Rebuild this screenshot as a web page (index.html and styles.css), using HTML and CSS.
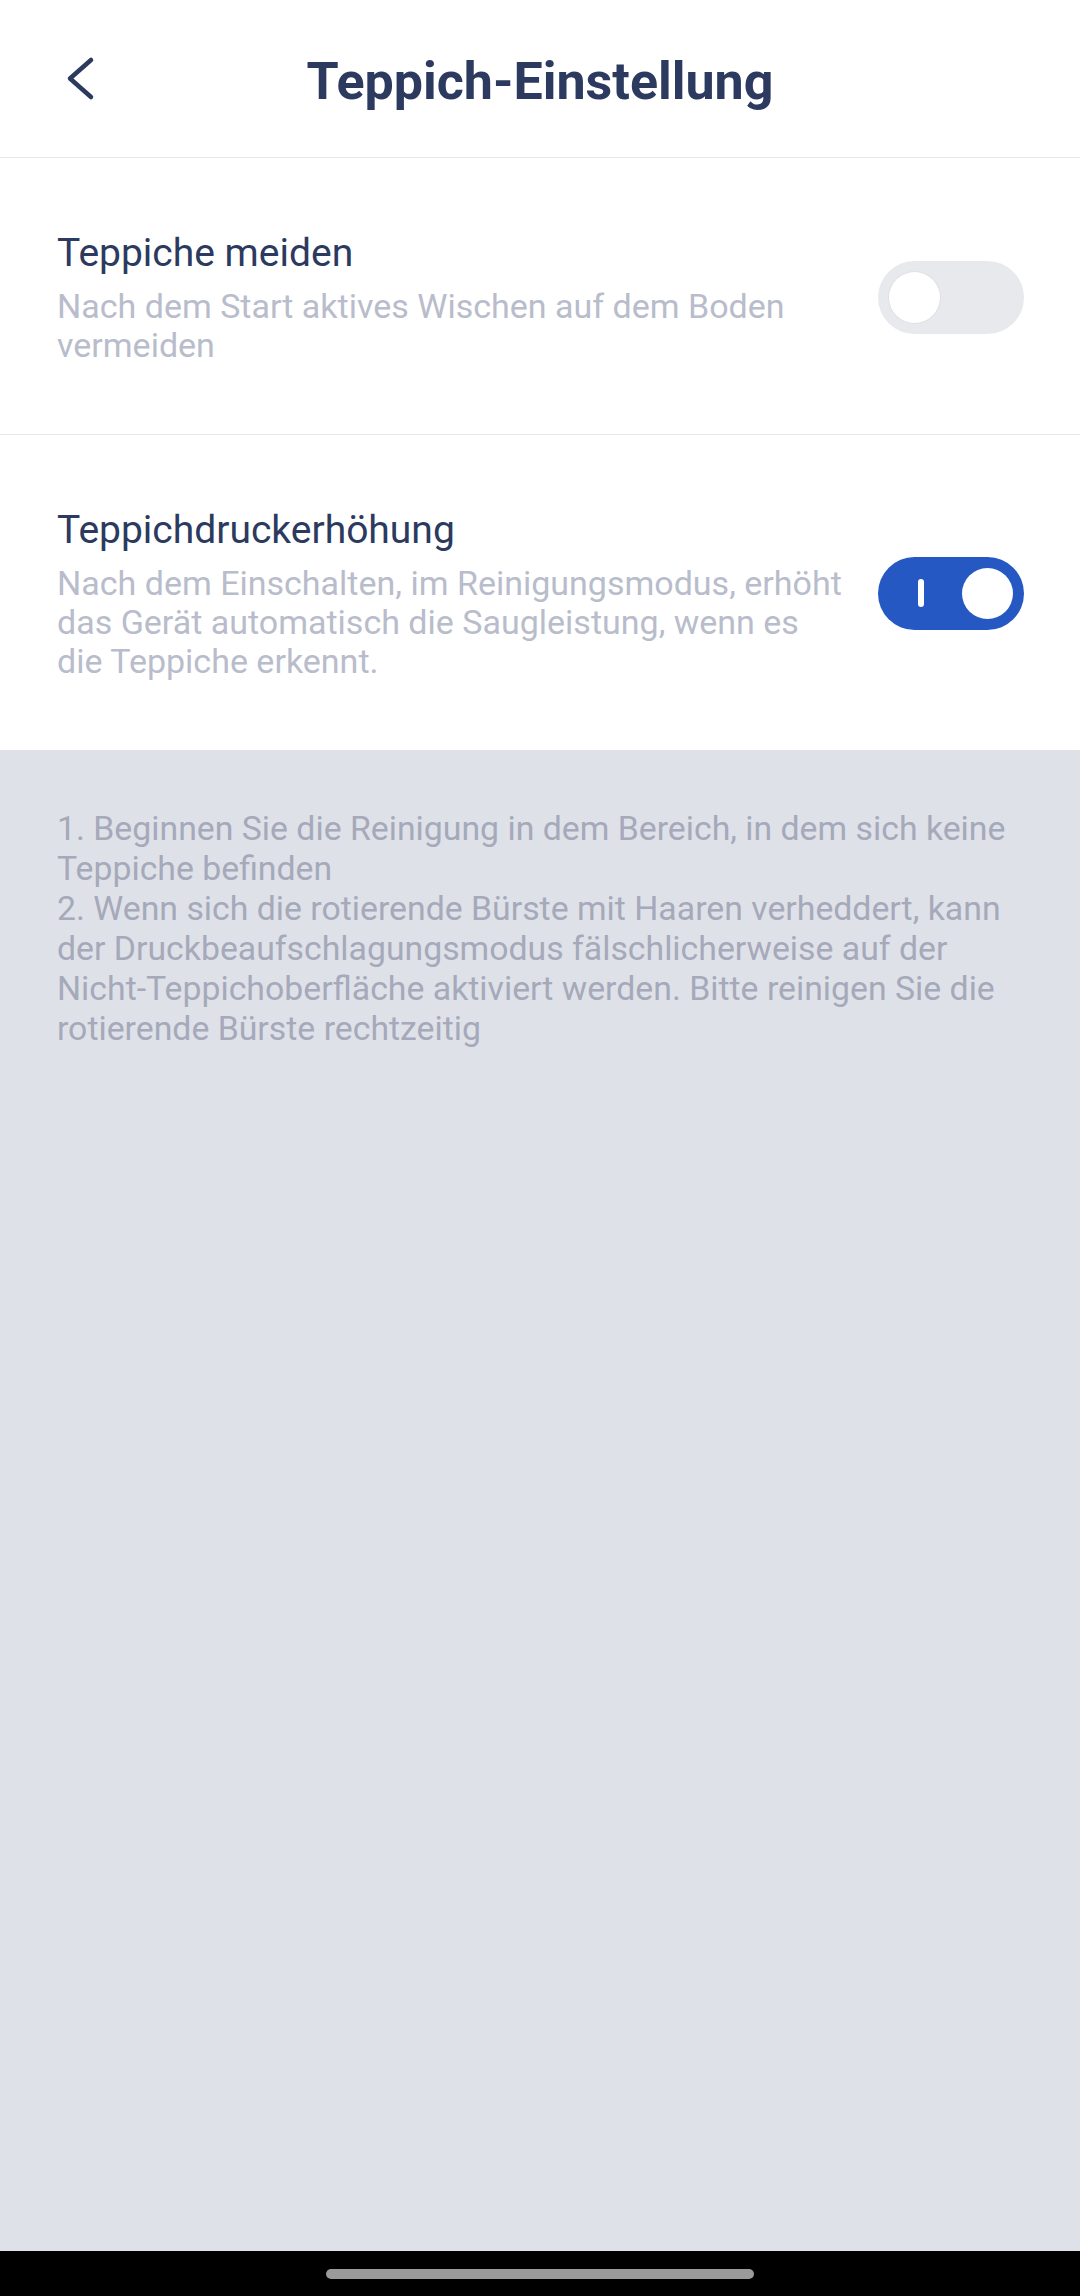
FILE: index.html
```html
<!DOCTYPE html>
<html lang="de">
<head>
    <meta charset="UTF-8">
    <meta name="viewport" content="width=device-width, initial-scale=1.0">
    <title>Teppich-Einstellung</title>
    <link rel="stylesheet" href="styles.css">
</head>
<body>
    <div class="screen">
        <!-- Header -->
        <header class="top-bar">
            <button class="back-btn" aria-label="Zurück">
                <svg width="36" height="48" viewBox="0 0 36 48">
                    <path d="M31 6 L10 24.5 L31 43" fill="none" stroke="#2b3a5e" stroke-width="4.5" stroke-linecap="round" stroke-linejoin="round"/>
                </svg>
            </button>
            <h1>Teppich-Einstellung</h1>
        </header>

        <!-- Settings -->
        <section class="settings">
            <div class="setting-row">
                <div class="setting-text">
                    <div class="setting-title">Teppiche meiden</div>
                    <div class="setting-desc">Nach dem Start aktives Wischen auf dem Boden vermeiden</div>
                </div>
                <div class="switch"><span class="knob"></span></div>
            </div>
            <div class="setting-row">
                <div class="setting-text">
                    <div class="setting-title">Teppichdruckerhöhung</div>
                    <div class="setting-desc">Nach dem Einschalten, im Reinigungsmodus, erhöht das Gerät automatisch die Saugleistung, wenn es die Teppiche erkennt.</div>
                </div>
                <div class="switch on"><span class="mark"></span><span class="knob"></span></div>
            </div>
        </section>

        <!-- Hints -->
        <section class="notes">
            <p>1. Beginnen Sie die Reinigung in dem Bereich, in dem sich keine Teppiche befinden</p>
            <p>2. Wenn sich die rotierende Bürste mit Haaren verheddert, kann der Druckbeaufschlagungsmodus fälschlicherweise auf der Nicht-Teppichoberfläche aktiviert werden. Bitte reinigen Sie die rotierende Bürste rechtzeitig</p>
        </section>

        <div class="nav-bar"><span class="home-pill"></span></div>
    </div>
</body>
</html>
```

FILE: styles.css
```css
* {
    box-sizing: border-box;
}

body {
    margin: 0;
    font-family: Roboto, 'Noto Sans', sans-serif;
    background-color: #dfe1e9;
}

.screen {
    width: 1080px;
    height: 2296px;
    display: flex;
    flex-direction: column;
}

.top-bar {
    height: 158px;
    padding-top: 6px;
    background: #fff;
    border-bottom: 1px solid #e8e8ea;
    display: flex;
    align-items: center;
    justify-content: center;
    position: relative;
}

.top-bar h1 {
    margin: 0;
    font-size: 52px;
    font-weight: 700;
    color: #2b3a5e;
}

.back-btn {
    position: absolute;
    left: 60px;
    top: 54px;
    padding: 0;
    border: none;
    background: none;
    display: flex;
}

.settings {
    background: #fff;
}

.setting-row {
    display: flex;
    align-items: center;
    justify-content: space-between;
    padding: 71px 56px 69px 57px;
}

.setting-row + .setting-row {
    border-top: 1px solid #e8e8ea;
}

.setting-text {
    width: 788px;
}

.setting-title {
    font-size: 39px;
    line-height: 48px;
    color: #2b3a5e;
}

.setting-desc {
    margin-top: 10px;
    font-size: 34px;
    line-height: 39px;
    color: #b8bccb;
}

.switch {
    width: 146px;
    height: 73px;
    border-radius: 37px;
    background: #e8e9ed;
    position: relative;
    flex-shrink: 0;
}

.switch .knob {
    position: absolute;
    top: 11px;
    left: 11px;
    width: 51px;
    height: 51px;
    border-radius: 50%;
    background: #fff;
    box-shadow: 0 0 0 1px #e0e1e6;
}

.switch.on {
    background: #2658c4;
}

.switch.on .knob {
    left: auto;
    right: 11px;
    box-shadow: none;
}

.switch .mark {
    position: absolute;
    left: 40px;
    top: 22px;
    width: 6px;
    height: 28px;
    border-radius: 3px;
    background: #fff;
}

.notes {
    flex: 1;
    padding: 59px 57px 0;
}

.notes p {
    margin: 0;
    font-size: 33.8px;
    line-height: 40px;
    color: #a5a9b9;
}

.nav-bar {
    height: 45px;
    background: #000;
    display: flex;
    justify-content: center;
    padding-top: 18px;
}

.home-pill {
    width: 428px;
    height: 10px;
    border-radius: 5px;
    background: #9a9a9a;
}
```
